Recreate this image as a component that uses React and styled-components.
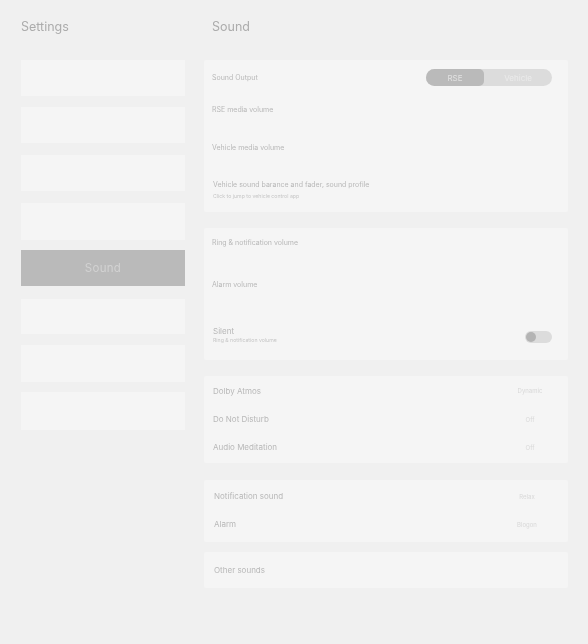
import React from 'react';
import styled, { createGlobalStyle } from 'styled-components';

const Global = createGlobalStyle`
  html, body { margin: 0; padding: 0; background: #f0f0f0; }
  body { font-family: "Inter", "Liberation Sans", sans-serif; }
`;

const Page = styled.div`
  width: 588px;
  height: 644px;
  box-sizing: border-box;
  padding: 0 21px;
  display: flex;
  gap: 19px;
  background: #f0f0f0;
  overflow: hidden;
  filter: blur(0.6px);
`;

const Sidebar = styled.nav`
  width: 164px;
  flex: none;
  display: flex;
  flex-direction: column;
`;

const Main = styled.main`
  width: 364px;
  flex: none;
  display: flex;
  flex-direction: column;
`;

const Title = styled.h1`
  margin: 0;
  height: 60px;
  box-sizing: border-box;
  padding: 19px 0 0 ${p => p.$inset || 0}px;
  font-size: 12.5px;
  line-height: 16px;
  font-weight: 400;
  color: #acacac;
`;

const NavItem = styled.div`
  height: ${p => p.$h}px;
  margin-top: ${p => p.$top || 0}px;
  display: flex;
  align-items: center;
  justify-content: center;
  background: ${p => (p.$active ? '#bababa' : '#f5f5f5')};
  color: #d2d2d2;
  font-size: 11.5px;
  letter-spacing: 0.3px;
`;

const Card = styled.section`
  height: ${p => p.$h}px;
  margin-top: ${p => p.$top || 0}px;
  box-sizing: border-box;
  background: #f5f5f5;
  border-radius: 2px;
  display: flex;
  flex-direction: column;
`;

const Row = styled.div`
  height: ${p => p.$h}px;
  flex: none;
  box-sizing: border-box;
  padding: ${p => p.$pad || '0 16px 0 8px'};
  display: flex;
  justify-content: space-between;
  align-items: ${p => p.$align || 'center'};
`;

const TextStack = styled.div`
  display: flex;
  flex-direction: column;
`;

const Label = styled.span`
  font-size: ${p => p.$size || 7}px;
  line-height: 10px;
  color: #b8b8b8;
`;

const Sub = styled.span`
  font-size: 5.2px;
  line-height: 6px;
  color: #c6c6c6;
  margin-top: ${p => p.$top || 1}px;
`;

const Value = styled.span`
  width: 40px;
  text-align: center;
  margin-right: ${p => p.$right || 2}px;
  font-size: 6px;
  color: #d8d8d8;
`;

const Segmented = styled.div`
  width: 126px;
  height: 17px;
  border-radius: 9px;
  background: #dcdcdc;
  display: flex;
  overflow: hidden;
`;

const Segment = styled.div`
  width: ${p => p.$w}px;
  display: flex;
  align-items: center;
  justify-content: center;
  font-size: 8px;
  color: ${p => (p.$on ? '#e2e2e2' : '#ebebeb')};
  background: ${p => (p.$on ? '#bababa' : 'transparent')};
  border-radius: ${p => (p.$on ? '0 5px 5px 0' : '0')};
`;

const Toggle = styled.div`
  width: 27px;
  height: 12px;
  border-radius: 6px;
  background: #dcdcdc;
  display: flex;
  align-items: center;
  padding-left: 1px;
  box-sizing: border-box;
`;

const Knob = styled.div`
  width: 10px;
  height: 10px;
  border-radius: 50%;
  background: #b4b4b4;
`;

const navItems = [
  { h: 36 },
  { h: 36, top: 11 },
  { h: 36, top: 12 },
  { h: 37, top: 12 },
  { h: 36, top: 10, active: true, label: 'Sound' },
  { h: 35, top: 13 },
  { h: 37, top: 11 },
  { h: 38, top: 10 }
];

export default function App() {
  return (
    <>
      <Global />
      <Page>
        <Sidebar>
          <Title>Settings</Title>
          {navItems.map((item, i) => (
            <NavItem key={i} $h={item.h} $top={item.top} $active={item.active}>
              {item.label}
            </NavItem>
          ))}
        </Sidebar>
        <Main>
          <Title $inset={8}>Sound</Title>
          <Card $h={152}>
            <Row $h={35}>
              <Label>Sound Output</Label>
              <Segmented>
                <Segment $w={58} $on>RSE</Segment>
                <Segment $w={68}>Vehicle</Segment>
              </Segmented>
            </Row>
            <Row $h={30} $align="flex-start" $pad="10px 16px 0 8px">
              <Label>RSE media volume</Label>
            </Row>
            <Row $h={39} $align="flex-start" $pad="18px 16px 0 8px">
              <Label>Vehicle media volume</Label>
            </Row>
            <Row $h={48} $align="flex-start" $pad="16px 16px 0 9px">
              <TextStack>
                <Label>Vehicle sound barance and fader, sound profile</Label>
                <Sub $top={3}>Click to jump to vehicle control app</Sub>
              </TextStack>
            </Row>
          </Card>
          <Card $h={132} $top={16}>
            <Row $h={20} $align="flex-end">
              <Label>Ring &amp; notification volume</Label>
            </Row>
            <Row $h={42} $align="flex-end">
              <Label>Alarm volume</Label>
            </Row>
            <Row $h={53} $align="flex-end" $pad="0 16px 0 9px">
              <TextStack>
                <Label $size={8}>Silent</Label>
                <Sub>Ring &amp; notification volume</Sub>
              </TextStack>
              <Toggle><Knob /></Toggle>
            </Row>
          </Card>
          <Card $h={87} $top={16}>
            <Row $h={29} $pad="0 16px 0 9px"><Label $size={8}>Dolby Atmos</Label><Value>Dynamic</Value></Row>
            <Row $h={28} $pad="0 16px 0 9px"><Label $size={8}>Do Not Disturb</Label><Value>Off</Value></Row>
            <Row $h={28} $pad="0 16px 0 9px"><Label $size={8}>Audio Meditation</Label><Value>Off</Value></Row>
          </Card>
          <Card $h={62} $top={17}>
            <Row $h={32} $pad="0 16px 0 10px"><Label $size={8}>Notification sound</Label><Value $right={5}>Relax</Value></Row>
            <Row $h={24} $pad="0 16px 0 10px"><Label $size={8}>Alarm</Label><Value $right={5}>Blogon</Value></Row>
          </Card>
          <Card $h={36} $top={10}>
            <Row $h={36} $pad="0 16px 0 10px"><Label $size={8}>Other sounds</Label></Row>
          </Card>
        </Main>
      </Page>
    </>
  );
}
